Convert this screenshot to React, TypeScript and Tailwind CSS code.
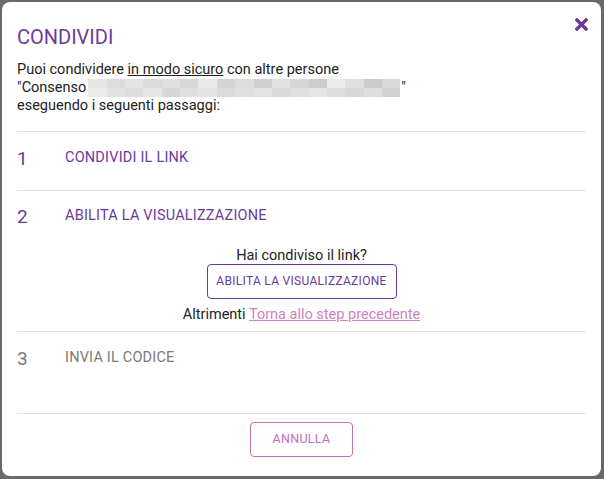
import React from 'react'

const blurRows = [
  ['#e6e6e6', '#dcdcdc', '#e4e4e4', '#dadada', '#e0e0e0', '#d8d8d8', '#e8e8e8', '#d4d4d4', '#dcdcdc', '#cfcfcf', '#e2e2e2', '#d6d6d6', '#cdcdcd', '#ebebeb', '#e0e0e0', '#cccccc', '#d9d9d9'],
  ['#eaeaea', '#e2e2e2', '#dddddd', '#e6e6e6', '#d6d6d6', '#dedede', '#e4e4e4', '#dadada', '#e0e0e0', '#e3e3e3', '#d9d9d9', '#dfdfdf', '#e5e5e5', '#dcdcdc', '#d7d7d7', '#dddddd', '#d3d3d3'],
]

function Blur() {
  return (
    <span className="inline-flex flex-col align-top w-[312px] h-[18px] ml-[2px] mr-[1px]">
      {blurRows.map((row, i) => (
        <span key={i} className="flex h-[9px]">
          {row.map((c, j) => (
            <span key={j} className="flex-1 h-full" style={{ backgroundColor: c }} />
          ))}
        </span>
      ))}
    </span>
  )
}

function StepHeader({ n, label, muted }: { n: string; label: string; muted?: boolean }) {
  return (
    <div className={`flex items-center h-[18px] ${muted ? 'text-[#7a7a7a]' : 'text-[#6a3b9c]'}`}>
      <span className="w-[48px] text-[19px] leading-none">{n}</span>
      <span className="text-[14.5px] tracking-[0.2px] uppercase">{label}</span>
    </div>
  )
}

export default function App() {
  return (
    <div className="w-[604px] h-[479px] bg-[#6a6a6a] pt-[2px] pl-[2px] overflow-hidden" style={{ fontFamily: 'Roboto, "Liberation Sans", sans-serif' }}>
      <div className="w-[599px] h-[474px] bg-white rounded-[8px] relative flex flex-col px-[15px]">
        <button className="absolute right-[13px] top-[16px] text-[#6a3b9c]">
          <svg width="13" height="13" viewBox="0 0 13 13">
            <path d="M2 2 L11 11 M11 2 L2 11" stroke="currentColor" strokeWidth="3.4" strokeLinecap="square" />
          </svg>
        </button>

        <h2 className="text-[#6a3b9c] text-[20px] leading-[24px] mt-[23px]">CONDIVIDI</h2>

        <p className="text-[#222] text-[14.5px] leading-[17.5px] mt-[12px]">
          Puoi condividere <span className="underline">in modo sicuro</span> con altre persone
          <br />
          "Consenso<Blur />"
          <br />
          eseguendo i seguenti passaggi:
        </p>

        <div className="border-t border-[#e4e4e4] mt-[17px] pt-[17px] pb-[23px]">
          <StepHeader n="1" label="Condividi il link" />
        </div>

        <div className="border-t border-[#e4e4e4] pt-[16px] pb-[8px]">
          <StepHeader n="2" label="Abilita la visualizzazione" />
          <div className="flex flex-col items-center mt-[22px] text-[14.5px] leading-[17px] text-[#222]">
            <span>Hai condiviso il link?</span>
            <button className="h-[35px] w-[190px] border border-[#6a3b9c] rounded-[4px] text-[#6a3b9c] text-[12px] tracking-[0.3px]">
              ABILITA LA VISUALIZZAZIONE
            </button>
            <span className="mt-[7px]">
              Altrimenti <a className="text-[#d27fc0] underline cursor-pointer">Torna allo step precedente</a>
            </span>
          </div>
        </div>

        <div className="border-t border-[#e4e4e4] pt-[17px] pb-[46px]">
          <StepHeader n="3" label="Invia il codice" muted />
        </div>

        <div className="border-t border-[#e4e4e4] flex justify-center pt-[8px]">
          <button className="h-[35px] w-[103px] border border-[#c96cb6] rounded-[4px] text-[#c96cb6] text-[12.5px] tracking-[0.3px]">
            ANNULLA
          </button>
        </div>
      </div>
    </div>
  )
}
